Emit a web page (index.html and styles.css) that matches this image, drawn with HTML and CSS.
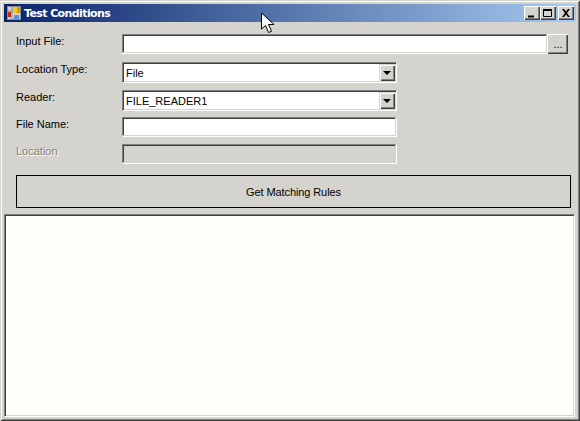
FILE: index.html
```html
<!DOCTYPE html>
<html lang="en">
<head>
    <meta charset="UTF-8">
    <meta name="viewport" content="width=device-width, initial-scale=1.0">
    <title>Test Conditions</title>
    <link rel="stylesheet" href="styles.css">
</head>
<body>
    <div class="window">
        <div class="titlebar">
            <svg class="app-icon" width="14" height="14" viewBox="0 0 14 14">
                <rect x="0.5" y="0.5" width="13" height="13" fill="#d4d3ce" stroke="#8a8a90"/>
                <path d="M5 1v12M5 5h8M1 5h4" stroke="#8a8a90" fill="none"/>
                <rect x="6" y="1" width="7" height="6" fill="#f8c818"/>
                <rect x="10" y="1" width="3" height="6" fill="#e09808"/>
                <rect x="1" y="6" width="3" height="5" fill="#c82818"/>
                <rect x="7" y="9" width="5" height="4" fill="#5890e0"/>
            </svg>
            <span class="title-text">Test Conditions</span>
            <div class="title-buttons">
                <div class="title-btn">
                    <svg width="12" height="10" viewBox="0 0 12 10"><path d="M2 7.5h6v2h-6z" fill="#000"/></svg>
                </div>
                <div class="title-btn">
                    <svg width="12" height="10" viewBox="0 0 12 10"><path d="M1.5 1.5h8v7h-8z" fill="none" stroke="#000"/><path d="M1 1h9v2h-9z"/></svg>
                </div>
                <div class="title-btn close-btn">
                    <svg width="12" height="10" viewBox="0 0 12 10"><path d="M2 1h2l2 2.5 2-2.5h2l-3 4 3 4h-2l-2-2.5-2 2.5h-2l3-4z" fill="#000"/></svg>
                </div>
            </div>
        </div>

        <div class="form">
            <div class="row row-input">
                <label>Input File:</label>
                <input class="field field-wide" type="text">
                <button class="browse-btn">...</button>
            </div>
            <div class="row row-type">
                <label>Location Type:</label>
                <div class="combo">
                    <span>File</span>
                    <div class="combo-arrow"></div>
                </div>
            </div>
            <div class="row row-reader">
                <label>Reader:</label>
                <div class="combo">
                    <span>FILE_READER1</span>
                    <div class="combo-arrow"></div>
                </div>
            </div>
            <div class="row row-name">
                <label>File Name:</label>
                <input class="field" type="text">
            </div>
            <div class="row row-location">
                <label class="disabled">Location</label>
                <input class="field field-disabled" type="text" disabled>
            </div>
            <button class="match-btn">Get Matching Rules</button>
        </div>

        <textarea class="output"></textarea>

        <svg class="cursor" width="14" height="23" viewBox="0 0 14 23">
            <path d="M1.5 1v16l4-3.5 3 7 3-1.2-3-6.8h5.5z" fill="#fff" stroke="#000" stroke-width="1"/>
        </svg>
    </div>
</body>
</html>
```

FILE: styles.css
```css
html, body {
    margin: 0;
    padding: 0;
    height: 100%;
}
body {
    font-family: "Liberation Sans", Arial, sans-serif;
    font-size: 11px;
    color: #000;
    background-color: #d4d3ce;
    overflow: hidden;
}
.window {
    position: relative;
    box-sizing: border-box;
    height: 421px;
    padding: 4px;
    display: flex;
    flex-direction: column;
    background-color: #d4d3ce;
    box-shadow: inset 1px 1px 0 #d4d3ce, inset -1px -1px 0 #404040, inset 2px 2px 0 #fff, inset -2px -2px 0 #808080;
}
.titlebar {
    height: 18px;
    display: flex;
    align-items: center;
    padding: 0 2px 0 3px;
    background: linear-gradient(to right, #0a246a, #a6caf0);
}
.app-icon {
    margin-right: 3px;
}
.title-text {
    color: #fff;
    font-family: "DejaVu Sans", sans-serif;
    font-weight: bold;
    font-size: 11px;
    letter-spacing: -0.6px;
    padding-top: 1px;
}
.title-buttons {
    margin-left: auto;
    display: flex;
}
.title-btn {
    box-sizing: border-box;
    width: 16px;
    height: 14px;
    display: flex;
    align-items: center;
    justify-content: center;
    background-color: #d4d3ce;
    box-shadow: inset 1px 1px 0 #fff, inset -1px -1px 0 #404040, inset -2px -2px 0 #808080;
}
.close-btn {
    margin-left: 2px;
}
.form {
    padding: 12px 5px 0 12px;
    display: flex;
    flex-direction: column;
}
.row {
    display: flex;
    align-items: flex-start;
}
.row label {
    width: 106px;
    flex: none;
    line-height: 14px;
}
.row label.disabled {
    color: #808080;
    text-shadow: 1px 1px 0 #fff;
}
.row-type {
    margin-top: 8px;
}
.row-reader {
    margin-top: 7px;
}
.row-name {
    margin-top: 6px;
}
.row-location {
    margin-top: 8px;
}
.field {
    box-sizing: border-box;
    width: 274px;
    height: 19px;
    margin: 0;
    padding: 0 2px;
    background-color: #fff;
    border: 1px solid;
    border-color: #808080 #d4d3ce #d4d3ce #808080;
    box-shadow: inset 1px 1px 0 #404040, 1px 1px 0 #fff;
    outline: none;
}
.field-wide {
    width: 425px;
    box-shadow: inset 1px 1px 0 #404040, 0 1px 0 #fff;
}
.field-disabled {
    background-color: #d4d3ce;
}
.browse-btn {
    box-sizing: border-box;
    width: 21px;
    height: 20px;
    margin: 0;
    padding: 0 0 0 1px;
    font: inherit;
    color: #000;
    background-color: #d4d3ce;
    border: none;
    box-shadow: inset 1px 1px 0 #fff, inset -1px -1px 0 #404040, inset -2px -2px 0 #808080;
}
.combo {
    box-sizing: border-box;
    width: 275px;
    height: 21px;
    padding: 2px 1px 2px 3px;
    display: flex;
    align-items: center;
    justify-content: space-between;
    background-color: #fff;
    border-top: 1px solid #808080;
    border-left: 1px solid #808080;
    border-right: 1px solid #fff;
    border-bottom: 1px solid #fff;
    box-shadow: inset 1px 1px 0 #404040, inset -1px -1px 0 #d4d3ce;
}
.combo span {
    padding-top: 1px;
}
.combo-arrow {
    box-sizing: border-box;
    width: 16px;
    height: 17px;
    display: flex;
    align-items: center;
    justify-content: center;
    background-color: #d4d3ce;
    box-shadow: inset 1px 1px 0 #d4d3ce, inset 2px 2px 0 #fff, inset -1px -1px 0 #404040, inset -2px -2px 0 #808080;
}
.combo-arrow::before {
    content: "";
    border-top: 4px solid #000;
    border-left: 4px solid transparent;
    border-right: 4px solid transparent;
}
.match-btn {
    box-sizing: border-box;
    width: 555px;
    height: 33px;
    margin: 12px 0 0 0;
    padding: 0;
    font: inherit;
    letter-spacing: -0.1px;
    color: #000;
    background-color: #d4d3ce;
    border: 1px solid #000;
}
.output {
    box-sizing: border-box;
    display: block;
    width: 571px;
    height: 203px;
    margin: 6px 0 0 0;
    padding: 0;
    resize: none;
    overflow: hidden;
    background-color: #fdfffb;
    border: 1px solid;
    border-color: #808080 #fff #fff #808080;
    box-shadow: inset 1px 1px 0 #404040, inset -1px -1px 0 #d4d3ce;
    outline: none;
}
.cursor {
    position: absolute;
    left: 260px;
    top: 12px;
}
```
